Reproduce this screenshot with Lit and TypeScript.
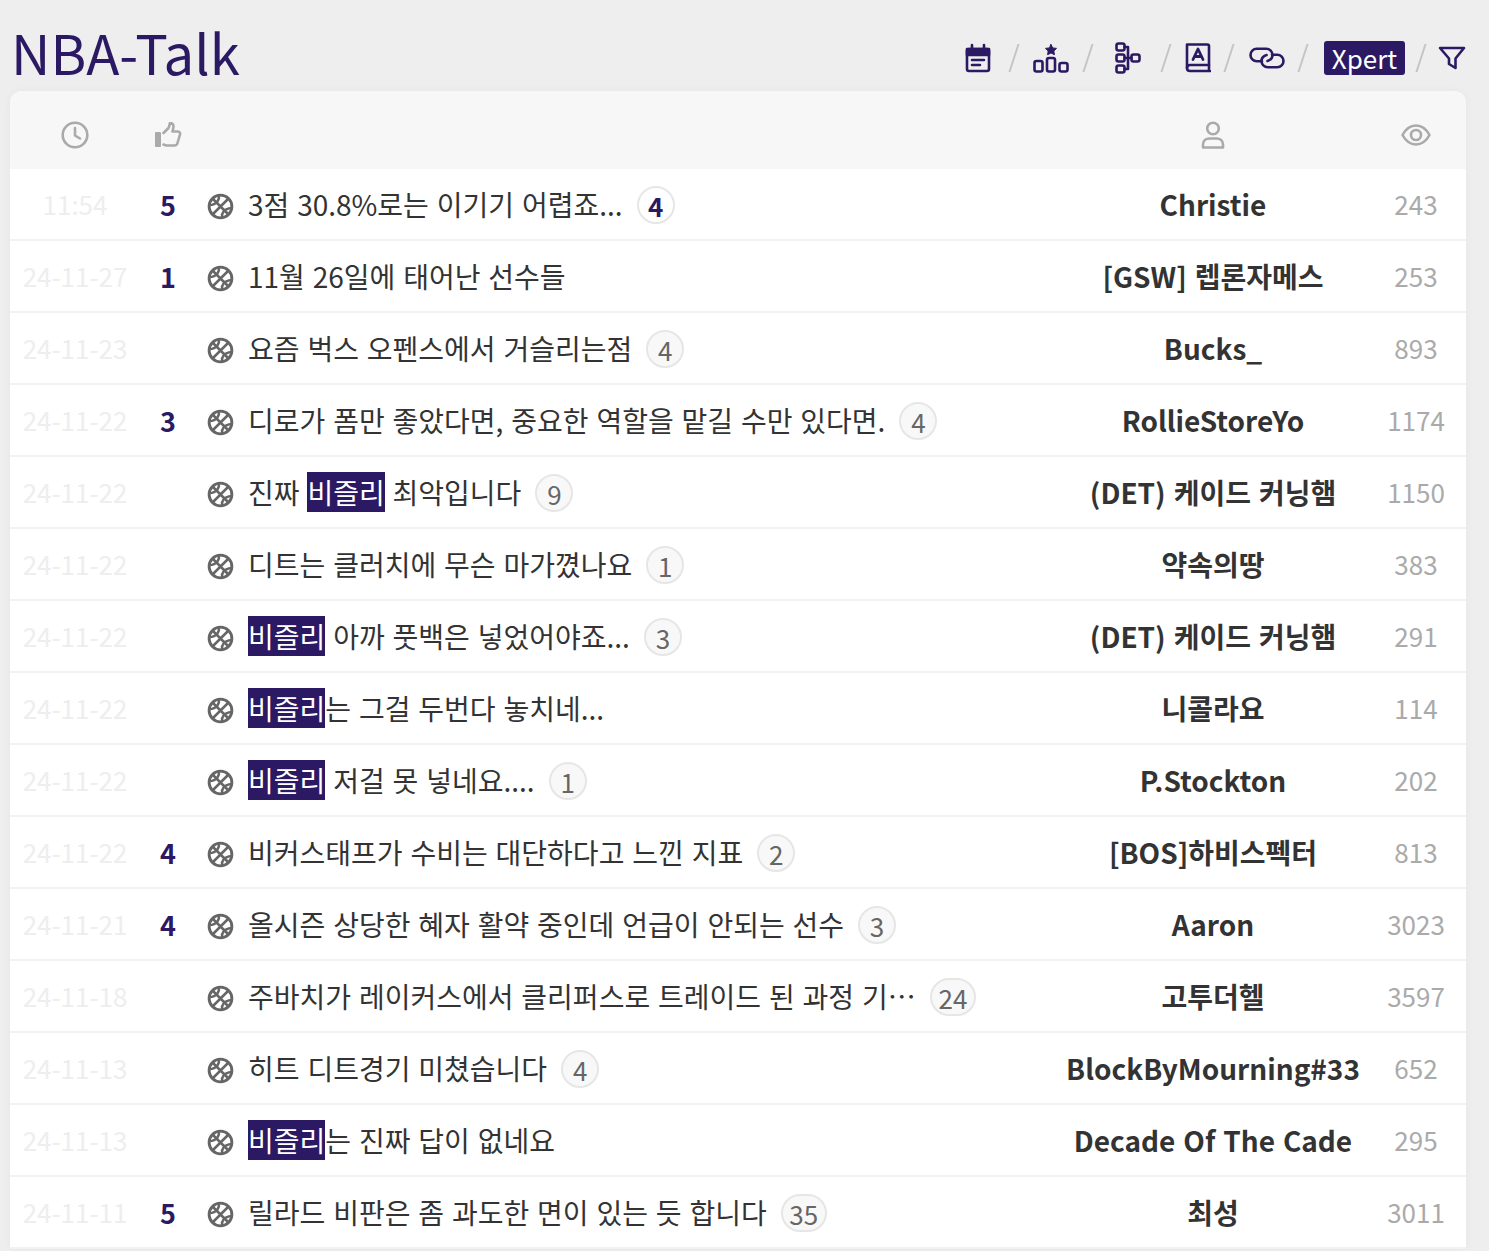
import { LitElement, html, css, svg } from "lit";
import { customElement } from "lit/decorators.js";

type Row = { t: string; v?: string; title: (string | { h: string })[]; c?: string; strong?: boolean; u: string; n: string };
const H = { h: "비즐리" };
const rows: Row[] = [
  { t: "11:54", v: "5", title: ["3점 30.8%로는 이기기 어렵죠..."], c: "4", strong: true, u: "Christie", n: "243" },
  { t: "24-11-27", v: "1", title: ["11월 26일에 태어난 선수들"], u: "[GSW] 렙론자메스", n: "253" },
  { t: "24-11-23", title: ["요즘 벅스 오펜스에서 거슬리는점"], c: "4", u: "Bucks_", n: "893" },
  { t: "24-11-22", v: "3", title: ["디로가 폼만 좋았다면, 중요한 역할을 맡길 수만 있다면."], c: "4", u: "RollieStoreYo", n: "1174" },
  { t: "24-11-22", title: ["진짜 ", H, " 최악입니다"], c: "9", u: "(DET) 케이드 커닝햄", n: "1150" },
  { t: "24-11-22", title: ["디트는 클러치에 무슨 마가꼈나요"], c: "1", u: "약속의땅", n: "383" },
  { t: "24-11-22", title: [H, " 아까 풋백은 넣었어야죠..."], c: "3", u: "(DET) 케이드 커닝햄", n: "291" },
  { t: "24-11-22", title: [H, "는 그걸 두번다 놓치네..."], u: "니콜라요", n: "114" },
  { t: "24-11-22", title: [H, " 저걸 못 넣네요...."], c: "1", u: "P.Stockton", n: "202" },
  { t: "24-11-22", v: "4", title: ["비커스태프가 수비는 대단하다고 느낀 지표"], c: "2", u: "[BOS]하비스펙터", n: "813" },
  { t: "24-11-21", v: "4", title: ["올시즌 상당한 혜자 활약 중인데 언급이 안되는 선수"], c: "3", u: "Aaron", n: "3023" },
  { t: "24-11-18", title: ["주바치가 레이커스에서 클리퍼스로 트레이드 된 과정 기사 번역"], c: "24", u: "고투더헬", n: "3597" },
  { t: "24-11-13", title: ["히트 디트경기 미쳤습니다"], c: "4", u: "BlockByMourning#33", n: "652" },
  { t: "24-11-13", title: [H, "는 진짜 답이 없네요"], u: "Decade Of The Cade", n: "295" },
  { t: "24-11-11", v: "5", title: ["릴라드 비판은 좀 과도한 면이 있는 듯 합니다"], c: "35", u: "최성", n: "3011" },
];

const ball = svg`<svg class="ball" viewBox="0 0 28 28" fill="none" stroke="currentColor" stroke-width="3"><circle cx="14" cy="14" r="11.800"/><path stroke-width="2.600" d="M5.700 5.700L22.300 22.300M22.300 5.700L5.700 22.300M12.500 2.500C13 7 10.500 12 2.500 12.500M15.500 25.500C15 21 17.500 16 25.500 15.500"/></svg>`;

@customElement("app-root")
export class AppRoot extends LitElement {
  static styles = css`
    :host { display: block; background: #eeeeee; font-family: "Noto Sans CJK KR", "Noto Sans", sans-serif; color: #333; overflow: hidden; box-sizing: border-box; height: 1251px; }
    .top { display: flex; align-items: center; justify-content: space-between; height: 91px; padding: 25px 23.500px 0 11px; box-sizing: border-box; }
    h1 { margin: 0 0 13px; font-size: 54.500px; font-weight: 400; color: #2b1a63; line-height: 60px; }
    .tools { display: flex; align-items: center; color: #2b1a63; height: 40px; }
    .tools svg { display: block; flex: none; fill: none; stroke: currentColor; stroke-width: 2.600; stroke-linejoin: round; stroke-linecap: round; }
    .sep { width: 2px; height: 28px; background: #c4c4c4; transform: skewX(-18deg); flex: none; }
    .cal { margin-right: 21.500px; }
    .rank { margin: 0 17.600px 0 18.500px; }
    .tree { margin: 0 23.700px 0 26.400px; }
    .book { margin: 0 17.500px 0 17.800px; }
    .link { margin: 0 17.100px 0 18.500px; }
    .xpert { background: #2b1a63; color: #fff; border-radius: 3px; font-size: 26px; line-height: 34px; height: 34px; width: 81px; text-align: center; flex: none; margin: 0 15px 0 20.400px; }
    .filter { margin-left: 15.500px; }
    .card { margin: 0 23px 0 10px; background: #fff; border-radius: 12px 12px 0 0; overflow: hidden; box-shadow: 0 0 8px rgba(0,0,0,.04); }
    .row { display: grid; grid-template-columns: 130px 56px 48px 816px 306px 100px; align-items: center; }
    .head { height: 78px; padding-top: 10px; box-sizing: border-box; background: #f7f7f7; }
    .head svg { display: block; margin: 0 auto; fill: none; stroke: #aaa; stroke-width: 2.600; stroke-linecap: round; stroke-linejoin: round; }
    .item { height: 72px; border-bottom: 2px solid #f2f2f2; box-sizing: border-box; }
    .time { text-align: center; font-size: 26px; color: #eeeeee; padding-bottom: 2px; }
    .vote { text-align: center; font-size: 27px; font-weight: 700; color: #2b1a63; }
    .ico { display: flex; justify-content: center; color: #666; padding: 4px 0 0 1px; }
    .ball { width: 27px; height: 27px; display: block; }
    .title { display: flex; align-items: center; padding-left: 4px; min-width: 0; font-size: 28px; word-spacing: 1.600px; color: #333; }
    .txt { white-space: nowrap; overflow: hidden; text-overflow: ellipsis; max-width: 668px; line-height: 40px; }
    mark { background: #2b1a63; color: #fff; }
    .cnt { flex: none; box-sizing: border-box; margin: 2px 0 0 14px; min-width: 38px; height: 38px; padding: 0 6.500px; border-radius: 19px; border: 2px solid #e6e6e6; background: #f8f8f8; color: #666; font-size: 26px; line-height: 36px; text-align: center; }
    .cnt.strong { background: #fff; color: #2b1a63; font-weight: 700; }
    .user { text-align: center; font-size: 28px; font-weight: 700; color: #333; white-space: nowrap; word-spacing: 1.600px; }
    .n { text-align: center; font-size: 26px; color: #aaa; padding-bottom: 2px; }
  `;

  render() {
    return html`
      <div class="top">
        <h1>NBA-Talk</h1>
        <div class="tools">
          <svg class="cal" width="26" height="30" viewBox="0 0 26 30"><path d="M2 8a2 2 0 0 1 2-2h18a2 2 0 0 1 2 2v18a2 2 0 0 1-2 2H4a2 2 0 0 1-2-2z"/><path d="M2 6h22v6H2z" fill="currentColor"/><path d="M7 2v5M19 2v5M7 17h12M7 22h8"/></svg>
          <span class="sep"></span>
          <svg class="rank" width="36" height="30" viewBox="0 0 36 30"><rect x="1.500" y="18" width="8" height="10.500" rx="2"/><rect x="14" y="15" width="8" height="13.500" rx="2"/><rect x="26.500" y="20" width="8" height="8.500" rx="2"/><path d="M18 1.500l1.700 3.400 3.800.5-2.700 2.600.6 3.700-3.400-1.800-3.400 1.800.6-3.700-2.700-2.600 3.800-.5z" fill="currentColor" stroke-width="1"/></svg>
          <span class="sep"></span>
          <svg class="tree" width="26" height="32" viewBox="0 0 26 32"><rect x="1.500" y="1.500" width="8" height="7" rx="2"/><rect x="1.500" y="12.500" width="8" height="7" rx="2"/><rect x="1.500" y="23.500" width="8" height="7" rx="2"/><rect x="16.500" y="12.500" width="8" height="7" rx="2"/><path d="M9.500 5h3.500v22H9.500M9.500 16h7"/></svg>
          <span class="sep"></span>
          <svg class="book" width="26" height="30" viewBox="0 0 26 30"><path d="M24 22V3a1.500 1.500 0 0 0-1.500-1.500H2V25"/><path d="M2 25c0-2 1.500-3 3-3h19M2 25c0 2 1.500 3 3 3h20M24 22v6"/><path d="M8 16.500L13 6l5 10.500M9.500 13.500h7" stroke-width="2.800"/></svg>
          <span class="sep"></span>
          <svg class="link" width="36" height="22" viewBox="0 0 36 22"><path d="M13 14.250H7.750a6.250 6.250 0 0 1 0-12.500h9.500a6.250 6.250 0 0 1 6.250 6.250c0 3-2 5-5 6"/><path d="M23 7.750h5.250a6.250 6.250 0 0 1 0 12.500h-9.500a6.250 6.250 0 0 1-6.250-6.250c0-3 2-5 5-6"/></svg>
          <span class="sep"></span>
          <span class="xpert">Xpert</span>
          <span class="sep"></span>
          <svg class="filter" width="28" height="24" viewBox="0 0 28 24"><path d="M2 2h24L17.500 12.500V22L11 18v-5.500z"/></svg>
        </div>
      </div>
      <div class="card">
        <div class="row head">
          <svg width="28" height="28" viewBox="0 0 28 28"><circle cx="14" cy="14" r="12.300"/><path d="M14 7v7.500l5 3"/></svg>
          <svg width="28" height="26" viewBox="0 0 28 26"><rect x="1" y="10" width="6" height="15" rx="1" fill="#aaa" stroke="none"/><path d="M9.500 11l5-5c1-2 1-3.500 1.500-5 2 0 3.500 1.500 3.500 4l-1 4.500h5.500c1.500 0 2.500 1.500 2 3l-2.500 8.500c-.4 1.500-1.500 2.500-3 2.500H13c-1.500 0-2.500-.5-3.500-1"/></svg>
          <span></span><span></span>
          <svg width="24" height="28" viewBox="0 0 24 28"><circle cx="12" cy="7.500" r="5.800"/><path d="M2 26.500v-3c0-4 3-6 6.500-6h7c3.500 0 6.500 2 6.500 6v3z"/></svg>
          <svg width="30" height="22" viewBox="0 0 30 22"><path d="M1.500 11C5 4.500 9.500 1.500 15 1.500S25 4.500 28.500 11C25 17.500 20.500 20.500 15 20.500S5 17.500 1.500 11z"/><circle cx="15" cy="11" r="5"/></svg>
        </div>
        ${rows.map(
          (r) => html`<div class="row item">
            <div class="time">${r.t}</div>
            <div class="vote">${r.v ?? ""}</div>
            <div class="ico">${ball}</div>
            <div class="title">
              <span class="txt">${r.title.map((p) => (typeof p === "string" ? p : html`<mark>${p.h}</mark>`))}</span>
              ${r.c ? html`<span class="cnt ${r.strong ? "strong" : ""}">${r.c}</span>` : ""}
            </div>
            <div class="user">${r.u}</div>
            <div class="n">${r.n}</div>
          </div>`
        )}
      </div>
    `;
  }
}
